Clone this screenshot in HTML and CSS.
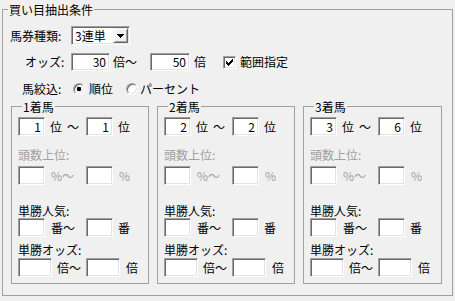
FILE: index.html
```html
<!DOCTYPE html>
<html lang="ja">
<head>
<meta charset="utf-8">
<link rel="stylesheet" href="styles.css">
</head>
<body>
<fieldset class="outer">
  <legend class="otitle">買い目抽出条件</legend>
  <div class="row r1">
    <span class="lbl l1">馬券種類:</span>
    <span class="combo"><span class="combo-text">3連単</span><span class="combo-btn"><svg width="7" height="4" viewBox="0 0 7 4" shape-rendering="crispEdges"><rect x="0" y="0" width="7" height="1"/><rect x="1" y="1" width="5" height="1"/><rect x="2" y="2" width="3" height="1"/><rect x="3" y="3" width="1" height="1"/></svg></span></span>
  </div>
  <div class="row r2">
    <span class="lbl l2">オッズ:</span>
    <span class="tb w39">30</span>
    <span class="u uo1">倍～</span>
    <span class="tb w40">50</span>
    <span class="u uo2">倍</span>
    <span class="chk"><svg width="7" height="7" viewBox="0 0 7 7" shape-rendering="crispEdges"><rect x="0" y="2" width="1" height="3"/><rect x="1" y="3" width="1" height="3"/><rect x="2" y="4" width="1" height="3"/><rect x="3" y="3" width="1" height="3"/><rect x="4" y="2" width="1" height="3"/><rect x="5" y="1" width="1" height="3"/><rect x="6" y="0" width="1" height="3"/></svg></span>
    <span class="chk-text">範囲指定</span>
  </div>
  <div class="row r3">
    <span class="lbl l3">馬絞込:</span>
    <span class="radio on"></span><span class="rtext">順位</span>
    <span class="radio r2nd"></span><span class="rtext2">パーセント</span>
  </div>
  <div class="groups">
    <fieldset class="grp">
      <legend>1着馬</legend>
      <div class="gr gr1"><span class="tb w27">1</span><span class="u ua">位<i class="g5"></i>～</span><span class="tb w27">1</span><span class="u ub">位</span></div>
      <div class="glbl gl1 dis">頭数上位:</div>
      <div class="gr gr2"><span class="tb w27"></span><span class="u uc dis">%～</span><span class="tb w27"></span><span class="u ud dis">%</span></div>
      <div class="glbl gl2">単勝人気:</div>
      <div class="gr gr3"><span class="tb w27"></span><span class="u uc">番～</span><span class="tb w27"></span><span class="u ub">番</span></div>
      <div class="glbl gl3">単勝オッズ:</div>
      <div class="gr gr4"><span class="tb w34"></span><span class="u ue">倍～</span><span class="tb w34"></span><span class="u ud">倍</span></div>
    </fieldset>
    <fieldset class="grp">
      <legend>2着馬</legend>
      <div class="gr gr1"><span class="tb w27">2</span><span class="u ua">位<i class="g5"></i>～</span><span class="tb w27">2</span><span class="u ub">位</span></div>
      <div class="glbl gl1 dis">頭数上位:</div>
      <div class="gr gr2"><span class="tb w27"></span><span class="u uc dis">%～</span><span class="tb w27"></span><span class="u ud dis">%</span></div>
      <div class="glbl gl2">単勝人気:</div>
      <div class="gr gr3"><span class="tb w27"></span><span class="u uc">番～</span><span class="tb w27"></span><span class="u ub">番</span></div>
      <div class="glbl gl3">単勝オッズ:</div>
      <div class="gr gr4"><span class="tb w34"></span><span class="u ue">倍～</span><span class="tb w34"></span><span class="u ud">倍</span></div>
    </fieldset>
    <fieldset class="grp g3">
      <legend>3着馬</legend>
      <div class="gr gr1"><span class="tb w27">3</span><span class="u ua">位<i class="g5"></i>～</span><span class="tb w27">6</span><span class="u ub">位</span></div>
      <div class="glbl gl1 dis">頭数上位:</div>
      <div class="gr gr2"><span class="tb w27"></span><span class="u uc dis">%～</span><span class="tb w27"></span><span class="u ud dis">%</span></div>
      <div class="glbl gl2">単勝人気:</div>
      <div class="gr gr3"><span class="tb w27"></span><span class="u uc">番～</span><span class="tb w27"></span><span class="u ub">番</span></div>
      <div class="glbl gl3">単勝オッズ:</div>
      <div class="gr gr4"><span class="tb w34"></span><span class="u ue">倍～</span><span class="tb w34"></span><span class="u ud">倍</span></div>
    </fieldset>
  </div>
</fieldset>
</body>
</html>
```

FILE: styles.css
```css
* { box-sizing: border-box; }
html, body { margin: 0; padding: 0; }
body {
  width: 455px;
  height: 301px;
  overflow: hidden;
  background: #f0f0f0;
  color: #000;
  font-family: "Noto Sans CJK JP", sans-serif;
  font-size: 12px;
  line-height: 14px;
}
fieldset {
  margin: 0;
  padding: 0;
  min-width: 0;
  border: 1px solid #a0a0a0;
}
legend {
  padding: 0 1px;
  line-height: 15px;
}
.outer {
  margin: 2px 0 0 2px;
  width: 451px;
  height: 294px;
}
.otitle { margin-left: 5px; }

.row { display: flex; align-items: center; }
.r1 { margin-top: 9px; height: 19px; }
.r2 { margin-top: 8px; height: 18px; }
.r3 { margin-top: 11px; height: 14px; }
.lbl { flex: none; width: 68px; white-space: nowrap; }
.l1 { padding-left: 7px; }
.l2 { padding-left: 22px; }
.l3 { padding-left: 19px; }

/* sunken text box */
.tb {
  flex: none;
  display: block;
  height: 19px;
  border: 1px solid;
  border-color: #a0a0a0 #fff #fff #a0a0a0;
  box-shadow: inset 1px 1px 0 #696969, inset -1px -1px 0 #e3e3e3;
  background: #fff;
  text-align: right;
  padding-right: 3px;
  line-height: 17px;
}
.r2 .tb { height: 18px; line-height: 16px; }
.w27 { width: 27px; }
.w34 { width: 34px; }
.w39 { width: 39px; }
.w40 { width: 40px; }

.u { flex: none; white-space: nowrap; }
.uo1 { width: 40px; padding-left: 3px; }
.uo2 { width: 33px; padding-left: 4px; }

/* combo box */
.combo {
  flex: none;
  display: flex;
  width: 59px;
  height: 19px;
  padding: 1px;
  border: 1px solid;
  border-color: #a0a0a0 #fff #fff #a0a0a0;
  box-shadow: inset 1px 1px 0 #696969, inset -1px -1px 0 #e3e3e3;
  background: #fff;
}
.combo-text { flex: 1; padding-left: 2px; line-height: 15px; }
.combo-btn {
  flex: none;
  width: 15px;
  height: 15px;
  display: flex;
  align-items: center;
  justify-content: center;
  background: #f0f0f0;
  border: 1px solid;
  border-color: #f0f0f0 #696969 #696969 #f0f0f0;
  box-shadow: inset 1px 1px 0 #fff, inset -1px -1px 0 #a0a0a0;
}
.combo-btn svg { display: block; fill: #000; }

/* checkbox */
.chk {
  flex: none;
  width: 13px;
  height: 13px;
  padding: 2px;
  border: 1px solid;
  border-color: #a0a0a0 #fff #fff #a0a0a0;
  box-shadow: inset 1px 1px 0 #696969, inset -1px -1px 0 #e3e3e3;
  background: #fff;
}
.chk svg { display: block; fill: #000; }
.chk-text { margin-left: 4px; }

/* radio */
.radio {
  flex: none;
  width: 12px;
  height: 12px;
  border-radius: 50%;
  border: 1px solid;
  border-color: #a0a0a0 #fff #fff #a0a0a0;
  box-shadow: inset 1px 1px 0 #696969, inset -1px -1px 0 #e3e3e3;
  background: #fff;
  margin-left: 2px;
}
.radio.on { background: radial-gradient(circle, #000 0, #000 2px, #fff 2.6px); }
.r2nd { margin-left: 13px; }
.rtext { margin-left: 4px; }
.rtext2 { margin-left: 2px; }

/* sub groups */
.groups {
  display: flex;
  gap: 8px;
  margin-top: 3px;
  padding-left: 8px;
}
.grp {
  flex: none;
  width: 138px;
  padding: 0 0 6px 6px;
}
.grp.g3 { width: 139px; }
.grp legend { margin-left: 4px; }

.gr { display: flex; align-items: center; height: 19px; }
.gr1 { margin-top: 3px; }
.gr2 { margin-top: 4px; }
.gr3 { margin-top: 0; }
.gr4 { margin-top: 1px; }
.glbl { height: 14px; white-space: nowrap; }
.gl1 { margin-top: 12px; }
.gl2 { margin-top: 19px; }
.gl3 { margin-top: 6px; }
.dis { color: #a0a0a0; }

.ua { width: 41px; padding-left: 5px; }
.ub { padding-left: 5px; }
.uc { width: 41px; padding-left: 6px; }
.ud { padding-left: 6px; }
.ue { width: 34px; padding-left: 5px; }
.g5 { display: inline-block; width: 5px; }
```
